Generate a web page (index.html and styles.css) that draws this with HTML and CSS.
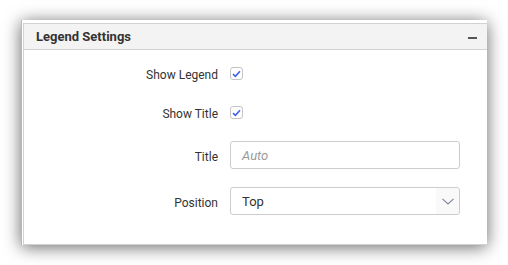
FILE: index.html
```html
<!DOCTYPE html>
<html lang="en">
<head>
  <meta charset="UTF-8" />
  <title>Legend Settings</title>
  <link rel="stylesheet" href="styles.css">
</head>
<body>
  <div class="panel">
    <div class="panel-inner">
      <div class="panel-header">
        <span class="panel-title">Legend Settings</span>
        <span class="collapse"></span>
      </div>
      <div class="form">
        <label class="field-label">Show Legend</label>
        <div class="field"><span class="check"><svg width="9" height="8" viewBox="0 0 9 8"><path d="M1 4.2 L3.4 6.4 L8 1.2" fill="none" stroke="#3f62f0" stroke-width="1.6"/></svg></span></div>

        <label class="field-label">Show Title</label>
        <div class="field"><span class="check"><svg width="9" height="8" viewBox="0 0 9 8"><path d="M1 4.2 L3.4 6.4 L8 1.2" fill="none" stroke="#3f62f0" stroke-width="1.6"/></svg></span></div>

        <label class="field-label">Title</label>
        <div class="field"><div class="textbox placeholder">Auto</div></div>

        <label class="field-label">Position</label>
        <div class="field">
          <div class="textbox select">
            <span>Top</span>
            <span class="select-icon"><svg width="12" height="7" viewBox="0 0 12 7"><path d="M0.5 0.8 L6 6 L11.5 0.8" fill="none" stroke="#7d879a" stroke-width="1.1"/></svg></span>
          </div>
        </div>
      </div>
    </div>
  </div>
</body>
</html>
```

FILE: styles.css
```css
body {
  margin: 0;
  padding: 20px 21px 20px 21px;
  background: #fff;
  font-family: Roboto, "Liberation Sans", sans-serif;
  color: #333;
}
.panel {
  width: 466px;
  height: 225px;
  box-sizing: border-box;
  background: #fff;
  padding: 3px 0 0 1px;
  border-left: 1px solid #b8b8b8;
  box-shadow: 0 2px 16px rgba(0,0,0,0.6);
}
.panel-inner {
  height: 100%;
  box-sizing: border-box;
  border: 1px solid #d2d2d2;
  border-right: none;
}
.panel-header {
  height: 25px;
  background: #f3f3f3;
  border-bottom: 1px solid #d2d2d2;
  display: flex;
  align-items: center;
  justify-content: space-between;
  padding: 0 10px 0 12px;
}
.panel-title {
  font-size: 13px;
  font-weight: bold;
  color: #333;
}
.collapse {
  width: 9px;
  height: 2px;
  background: #555;
  margin-top: 2px;
}
.form {
  display: grid;
  grid-template-columns: 194px 230px;
  grid-template-rows: 39px 39px 46px 46px;
  column-gap: 12px;
  padding-top: 4px;
}
.field-label {
  font-size: 12px;
  color: #333;
  text-align: right;
  align-self: center;
  padding-top: 3px;
}
.field {
  display: flex;
  align-items: center;
}
.check {
  width: 11px;
  height: 11px;
  border: 1px solid #c4c4c4;
  border-radius: 3px;
  display: flex;
  align-items: center;
  justify-content: center;
}
.textbox {
  width: 230px;
  height: 28px;
  box-sizing: border-box;
  border: 1px solid #cccccc;
  border-radius: 3px;
  font-size: 13px;
  padding-left: 11px;
  display: flex;
  align-items: center;
}
.placeholder {
  color: #9a9a9a;
  font-style: italic;
}
.select {
  justify-content: space-between;
  padding-right: 0;
  color: #333;
}
.select-icon {
  width: 23px;
  height: 26px;
  background: #f9f9f9;
  border-radius: 0 3px 3px 0;
  display: flex;
  align-items: center;
  justify-content: center;
}
```
